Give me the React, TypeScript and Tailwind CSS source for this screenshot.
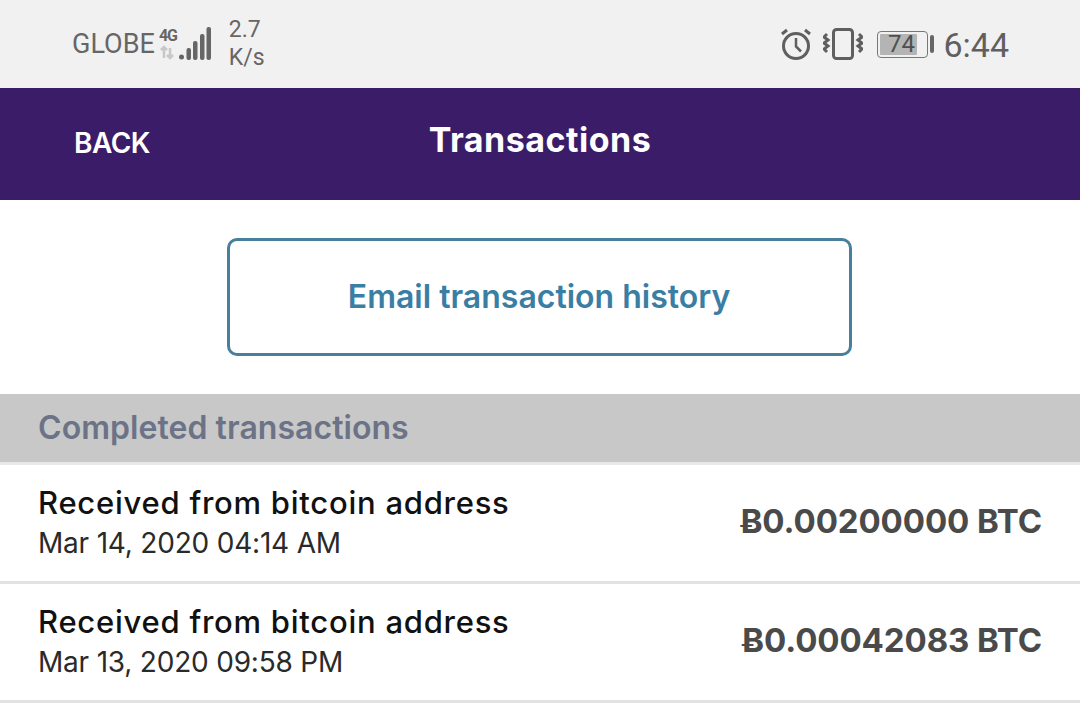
import React from "react";

const rows = [
  { title: "Received from bitcoin address", date: "Mar 14, 2020 04:14 AM", amount: "Ƀ0.00200000 BTC" },
  { title: "Received from bitcoin address", date: "Mar 13, 2020 09:58 PM", amount: "Ƀ0.00042083 BTC" },
];

function SignalIcon() {
  return (
    <svg width="52" height="36" viewBox="0 0 52 36" className="block">
      <text x="0" y="15" fontSize="16" fontWeight="700" fill="#666" fontFamily="Roboto, sans-serif" textLength="19">4G</text>
      <path d="M5 21v11M2 24l3-3 3 3M11 32V22M8 29l3 3 3-3" stroke="#c8c8c8" strokeWidth="2.5" fill="none" />
      <circle cx="22.5" cy="31" r="2.5" fill="#666" />
      <rect x="27.5" y="22" width="4.5" height="12" rx="2" fill="#666" />
      <rect x="34" y="15" width="4.5" height="19" rx="2" fill="#666" />
      <rect x="41" y="8" width="4.5" height="26" rx="2" fill="#666" />
      <rect x="47.5" y="1" width="4.5" height="33" rx="2" fill="#666" />
    </svg>
  );
}

function AlarmIcon() {
  return (
    <svg width="32" height="32" viewBox="0 0 32 32" fill="none" stroke="#5f5f5f" className="block">
      <circle cx="16" cy="18" r="12.5" strokeWidth="3" />
      <path d="M16 10v8.5l5 5" strokeWidth="2.5" />
      <path d="M2 6l5-4M30 6l-5-4" strokeWidth="3" />
    </svg>
  );
}

function VibrateIcon() {
  return (
    <svg width="40" height="32" viewBox="0 0 40 32" fill="none" stroke="#5f5f5f" className="block">
      <rect x="10.5" y="1.5" width="19" height="29" rx="3" strokeWidth="3" />
      <path d="M4 6l-3 3 4 3-4 3 4 3-4 3 3 3" strokeWidth="3" />
      <path d="M36 6l3 3-4 3 4 3-4 3 4 3-3 3" strokeWidth="3" />
    </svg>
  );
}

function BatteryIcon() {
  return (
    <div className="flex items-center gap-[2px]">
      <div className="relative w-[51px] h-[27px] rounded-[4px] border border-[#777] p-[2px]">
        <div className="h-full w-[37px] rounded-[1px] bg-[#b4b4b4]" />
        <span className="absolute inset-0 flex items-center justify-center pr-[3px] text-[24px] leading-none text-[#4f4f4f]">
          74
        </span>
      </div>
      <div className="w-[4px] h-[18px] rounded-[2px] bg-[#666]" />
    </div>
  );
}

export default function App() {
  return (
    <div className="w-[1080px] h-[704px] overflow-hidden bg-white font-['Roboto',sans-serif]">
      {/* Status bar */}
      <div className="h-[88px] bg-[#f1f1f1] flex items-center justify-between pl-[72px] pr-[71px]">
        <div className="flex items-center text-[#666]">
          <span className="text-[27px] leading-none">GLOBE</span>
          <div className="ml-[4px]">
            <SignalIcon />
          </div>
          <div className="ml-[18px] text-[23px] leading-[28px]">
            <div>2.7</div>
            <div>K/s</div>
          </div>
        </div>
        <div className="flex items-center text-[#5f5f5f]">
          <AlarmIcon />
          <div className="ml-[11px]">
            <VibrateIcon />
          </div>
          <div className="ml-[14px]">
            <BatteryIcon />
          </div>
          <span className="ml-[9px] text-[34px] leading-none mt-[2px]">6:44</span>
        </div>
      </div>

      {/* Header */}
      <div className="relative h-[112px] bg-[#3b1c68] flex items-center justify-center text-white font-['Inter',sans-serif]">
        <span className="absolute left-[74px] top-[37px] text-[28px] leading-9 font-semibold tracking-[-0.5px]">BACK</span>
        <h1 className="text-[34px] leading-none font-bold mt-[-8px] tracking-[0.5px]">Transactions</h1>
      </div>

      {/* Email button */}
      <div className="h-[194px] flex items-center justify-center pr-[2px]">
        <button className="w-[625px] h-[118px] rounded-[10px] border-[3px] border-[#4a7f9b] text-[#3a7ea3] text-[32px] font-semibold font-['Inter',sans-serif]">
          Email transaction history
        </button>
      </div>

      {/* Section */}
      <div className="h-[68px] bg-[#c8c8c8] flex items-center px-[38px] text-[#6c7386] text-[32px] font-semibold font-['Inter',sans-serif] tracking-[0.05px]">
        Completed transactions
      </div>

      <div className="border-t-[3px] border-[#e8e8e8] font-['Inter',sans-serif]">
        {rows.map((row) => (
          <div key={row.date} className="h-[119px] border-b-[3px] border-[#e2e2e2] flex items-center justify-between pl-[38px] pr-[38px]">
            <div>
              <div className="text-[31px] leading-[40px] font-medium tracking-[0.75px] text-[#111]">{row.title}</div>
              <div className="text-[28px] leading-[40px] text-[#2a2a2a] tracking-[-0.2px]">{row.date}</div>
            </div>
            <div className="mt-[-3px] text-[#4a4a4a] text-[33px] font-bold tracking-[-0.1px] font-['Inter','DejaVu_Sans',sans-serif]">{row.amount}</div>
          </div>
        ))}
      </div>
    </div>
  );
}
